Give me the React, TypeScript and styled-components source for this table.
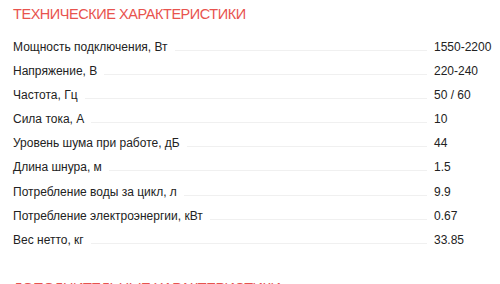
import React from "react";
import styled, { createGlobalStyle } from "styled-components";

const Global = createGlobalStyle`
  html, body { margin: 0; padding: 0; background: #fff; }
  body { font-family: "Liberation Sans", Arial, sans-serif; color: #222; overflow: hidden; }
`;

const Page = styled.div`
  padding: 4px 0 0 13px;
`;

const Heading = styled.h2`
  margin: 0 0 16px;
  font-size: 14.5px;
  line-height: 20px;
  font-weight: 400;
  letter-spacing: -0.45px;
  color: #e8534e;
  text-transform: uppercase;
`;

const SecondHeading = styled(Heading)`
  margin-top: 21px;
`;

const List = styled.div`
  display: flex;
  flex-direction: column;
`;

const Row = styled.div`
  display: flex;
  align-items: baseline;
  height: 24.1px;
  font-size: 12px;
  line-height: 14px;
`;

const Label = styled.span`
  white-space: nowrap;
`;

const Leader = styled.div`
  flex: 1;
  height: 0;
  margin: 0 7px 0 7px;
  border-bottom: 1px solid #f0f0f0;
`;

const Value = styled.span`
  width: 66px;
  flex: none;
`;

const specs: [string, string][] = [
  ["Мощность подключения, Вт", "1550-2200"],
  ["Напряжение, В", "220-240"],
  ["Частота, Гц", "50 / 60"],
  ["Сила тока, А", "10"],
  ["Уровень шума при работе, дБ", "44"],
  ["Длина шнура, м", "1.5"],
  ["Потребление воды за цикл, л", "9.9"],
  ["Потребление электроэнергии, кВт", "0.67"],
  ["Вес нетто, кг", "33.85"],
];

export default function App() {
  return (
    <>
      <Global />
      <Page>
        <Heading>Технические характеристики</Heading>
        <List>
          {specs.map(([l, v]) => (
            <Row key={l}>
              <Label>{l}</Label>
              <Leader />
              <Value>{v}</Value>
            </Row>
          ))}
        </List>
        <SecondHeading>Дополнительные характеристики</SecondHeading>
      </Page>
    </>
  );
}
